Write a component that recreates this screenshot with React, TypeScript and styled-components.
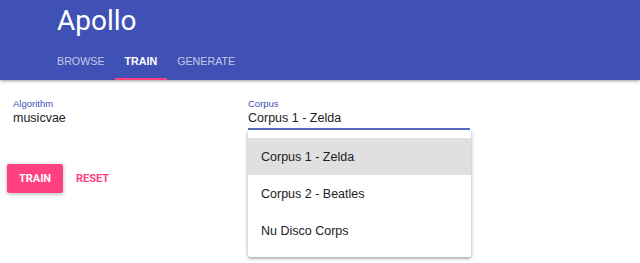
import React from 'react';
import styled, { createGlobalStyle } from 'styled-components';

const GlobalStyle = createGlobalStyle`
    html, body {
        margin: 0;
        padding: 0;
        background: #ffffff;
        font-family: 'Liberation Sans', Arial, sans-serif;
        color: #212121;
    }
`;

const Page = styled.div`
    width: 640px;
    height: 263px;
    overflow: hidden;
    position: relative;
`;

const Header = styled.header`
    background: #3f51b5;
    height: 80px;
    display: flex;
    flex-direction: column;
    box-shadow: 0 1px 3px rgba(0, 0, 0, 0.4);
    position: relative;
    z-index: 1;
`;

const Title = styled.h1`
    margin: 0;
    padding-left: 57px;
    height: 42px;
    line-height: 42px;
    font-family: Roboto, sans-serif;
    font-weight: 400;
    font-size: 28px;
    color: #ffffff;
`;

const Tabs = styled.nav`
    display: flex;
    padding-left: 47px;
    height: 38px;
`;

const Tab = styled.div<{ active?: boolean }>`
    padding: 0 10px;
    line-height: 38px;
    font-weight: ${props => (props.active ? 700 : 400)};
    font-size: 10.7px;
    color: ${props => (props.active ? '#ffffff' : 'rgba(255, 255, 255, 0.7)')};
    border-bottom: 2px solid ${props => (props.active ? '#ff4081' : 'transparent')};
    box-sizing: border-box;
`;

const Content = styled.main`
    display: flex;
    flex-direction: column;
`;

const FieldRow = styled.div`
    display: flex;
    padding-top: 18px;
`;

const Field = styled.div<{ left: number; width: number }>`
    position: relative;
    margin-left: ${props => props.left}px;
    width: ${props => props.width}px;
    display: flex;
    flex-direction: column;
`;

const Label = styled.label`
    font-size: 9.5px;
    line-height: 11px;
    color: #3f51b5;
    margin-bottom: 1px;
`;

const Value = styled.div<{ underlined?: boolean }>`
    font-size: 12.5px;
    line-height: 16px;
    padding-bottom: 2px;
    border-bottom: 2px solid ${props => (props.underlined ? '#5c6bc0' : 'transparent')};
`;

const Menu = styled.ul`
    position: absolute;
    top: 100%;
    left: 0;
    width: 223px;
    margin: 0;
    padding: 8px 0;
    list-style: none;
    background: #ffffff;
    box-shadow: 0 1px 4px rgba(0, 0, 0, 0.28), 0 2px 2px rgba(0, 0, 0, 0.14);
    border-radius: 2px;
    z-index: 2;
`;

const MenuItem = styled.li<{ selected?: boolean }>`
    height: 37px;
    line-height: 38px;
    padding-left: 13px;
    font-size: 12.5px;
    background: ${props => (props.selected ? '#e0e0e0' : 'transparent')};
`;

const Actions = styled.div`
    display: flex;
    align-items: center;
    gap: 13px;
    padding-left: 7px;
    margin-top: 34px;
`;

const RaisedButton = styled.button`
    height: 29px;
    width: 56px;
    border: none;
    border-radius: 2px;
    background: #ff4081;
    color: #ffffff;
    font-family: Roboto, sans-serif;
    font-weight: 700;
    font-size: 11px;
    box-shadow: 0 1px 4px rgba(0, 0, 0, 0.3);
    padding: 0;
`;

const FlatButton = styled.button`
    border: none;
    background: transparent;
    color: #ff4081;
    font-family: Roboto, sans-serif;
    font-weight: 700;
    font-size: 11px;
    padding: 0;
`;

const corpora = ['Corpus 1 - Zelda', 'Corpus 2 - Beatles', 'Nu Disco Corps'];

const App = () => (
    <Page>
        <GlobalStyle />
        <Header>
            <Title>Apollo</Title>
            <Tabs>
                <Tab>BROWSE</Tab>
                <Tab active>TRAIN</Tab>
                <Tab>GENERATE</Tab>
            </Tabs>
        </Header>
        <Content>
            <FieldRow>
                <Field left={13} width={150}>
                    <Label>Algorithm</Label>
                    <Value>musicvae</Value>
                </Field>
                <Field left={85} width={222}>
                    <Label>Corpus</Label>
                    <Value underlined>Corpus 1 - Zelda</Value>
                    <Menu>
                        {corpora.map((c, i) => (
                            <MenuItem key={c} selected={i === 0}>
                                {c}
                            </MenuItem>
                        ))}
                    </Menu>
                </Field>
            </FieldRow>
            <Actions>
                <RaisedButton>TRAIN</RaisedButton>
                <FlatButton>RESET</FlatButton>
            </Actions>
        </Content>
    </Page>
);

export default App;
